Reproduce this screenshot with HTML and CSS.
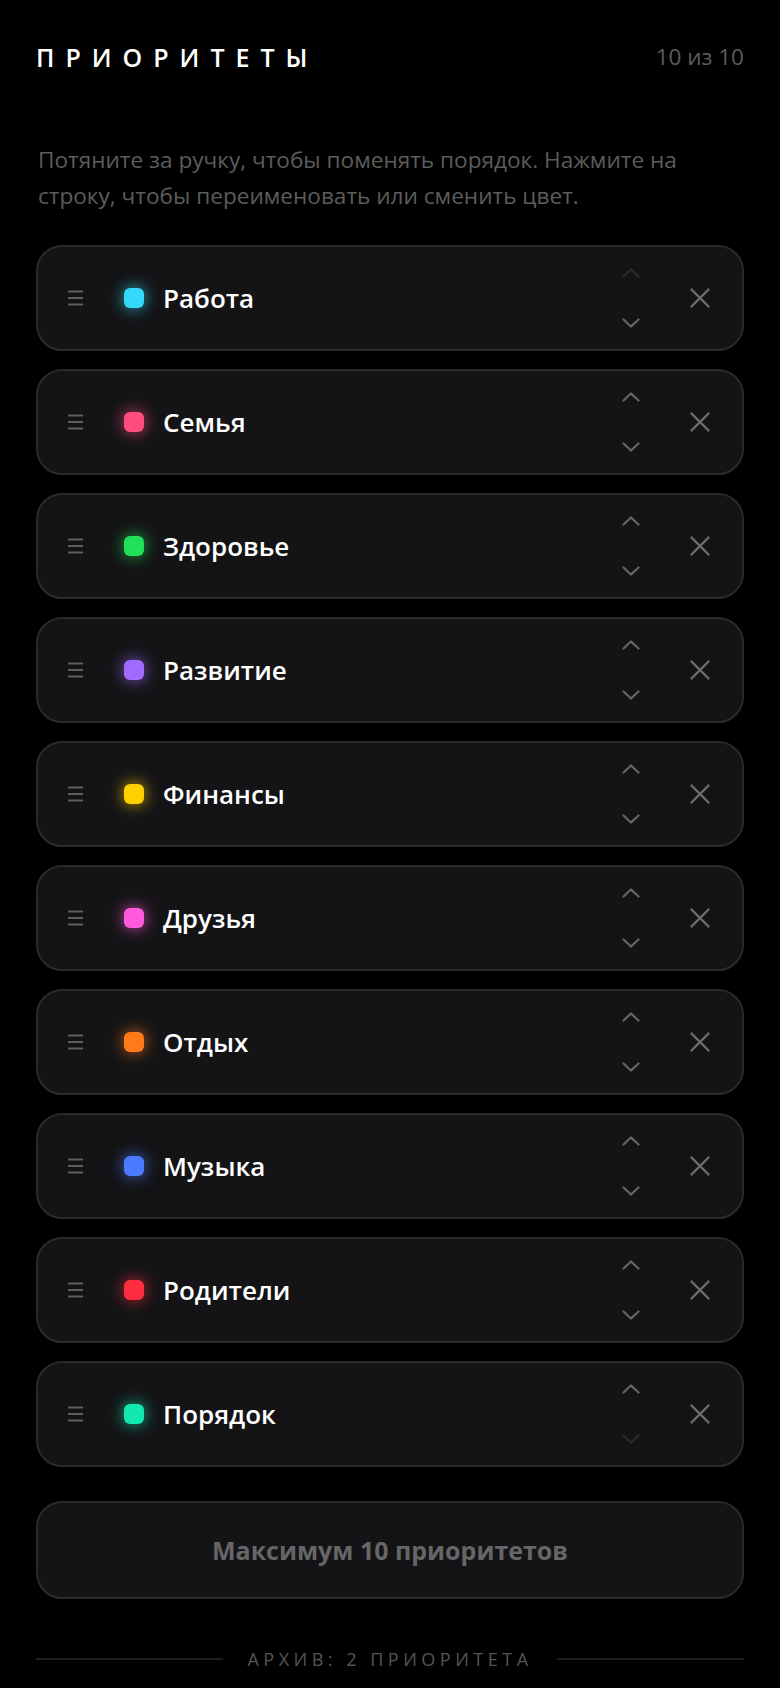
FILE: index.html
```html
<!DOCTYPE html>
<html lang="ru">
<head>
<meta charset="utf-8">
<title>Приоритеты</title>
<link rel="stylesheet" href="styles.css">
</head>
<body>
<div class="page">
  <header class="header">
    <h1 class="title">ПРИОРИТЕТЫ</h1>
    <span class="count">10 из 10</span>
  </header>
  <p class="hint">Потяните за ручку, чтобы поменять порядок. Нажмите на строку, чтобы переименовать или сменить цвет.</p>

  <ul class="list">
    <li class="row">
      <svg class="handle" width="15" height="16" viewBox="0 0 15 16"><path d="M0 1.5H15M0 8H15M0 14.5H15"/></svg>
      <span class="dot" style="--c:#34d8f8"></span>
      <span class="name">Работа</span>
      <span class="arrows">
        <svg class="chev off" width="18" height="10" viewBox="0 0 18 10"><path d="M1.5 8.5L9 1.5L16.5 8.5"/></svg>
        <svg class="chev" width="18" height="10" viewBox="0 0 18 10"><path d="M1.5 1.5L9 8.5L16.5 1.5"/></svg>
      </span>
      <svg class="close" width="20" height="20" viewBox="0 0 20 20"><path d="M1.5 1.5L18.5 18.5M18.5 1.5L1.5 18.5"/></svg>
    </li>
    <li class="row">
      <svg class="handle" width="15" height="16" viewBox="0 0 15 16"><path d="M0 1.5H15M0 8H15M0 14.5H15"/></svg>
      <span class="dot" style="--c:#ff4d80"></span>
      <span class="name">Семья</span>
      <span class="arrows">
        <svg class="chev" width="18" height="10" viewBox="0 0 18 10"><path d="M1.5 8.5L9 1.5L16.5 8.5"/></svg>
        <svg class="chev" width="18" height="10" viewBox="0 0 18 10"><path d="M1.5 1.5L9 8.5L16.5 1.5"/></svg>
      </span>
      <svg class="close" width="20" height="20" viewBox="0 0 20 20"><path d="M1.5 1.5L18.5 18.5M18.5 1.5L1.5 18.5"/></svg>
    </li>
    <li class="row">
      <svg class="handle" width="15" height="16" viewBox="0 0 15 16"><path d="M0 1.5H15M0 8H15M0 14.5H15"/></svg>
      <span class="dot" style="--c:#22e05a"></span>
      <span class="name">Здоровье</span>
      <span class="arrows">
        <svg class="chev" width="18" height="10" viewBox="0 0 18 10"><path d="M1.5 8.5L9 1.5L16.5 8.5"/></svg>
        <svg class="chev" width="18" height="10" viewBox="0 0 18 10"><path d="M1.5 1.5L9 8.5L16.5 1.5"/></svg>
      </span>
      <svg class="close" width="20" height="20" viewBox="0 0 20 20"><path d="M1.5 1.5L18.5 18.5M18.5 1.5L1.5 18.5"/></svg>
    </li>
    <li class="row">
      <svg class="handle" width="15" height="16" viewBox="0 0 15 16"><path d="M0 1.5H15M0 8H15M0 14.5H15"/></svg>
      <span class="dot" style="--c:#a26bff"></span>
      <span class="name">Развитие</span>
      <span class="arrows">
        <svg class="chev" width="18" height="10" viewBox="0 0 18 10"><path d="M1.5 8.5L9 1.5L16.5 8.5"/></svg>
        <svg class="chev" width="18" height="10" viewBox="0 0 18 10"><path d="M1.5 1.5L9 8.5L16.5 1.5"/></svg>
      </span>
      <svg class="close" width="20" height="20" viewBox="0 0 20 20"><path d="M1.5 1.5L18.5 18.5M18.5 1.5L1.5 18.5"/></svg>
    </li>
    <li class="row">
      <svg class="handle" width="15" height="16" viewBox="0 0 15 16"><path d="M0 1.5H15M0 8H15M0 14.5H15"/></svg>
      <span class="dot" style="--c:#ffd000"></span>
      <span class="name">Финансы</span>
      <span class="arrows">
        <svg class="chev" width="18" height="10" viewBox="0 0 18 10"><path d="M1.5 8.5L9 1.5L16.5 8.5"/></svg>
        <svg class="chev" width="18" height="10" viewBox="0 0 18 10"><path d="M1.5 1.5L9 8.5L16.5 1.5"/></svg>
      </span>
      <svg class="close" width="20" height="20" viewBox="0 0 20 20"><path d="M1.5 1.5L18.5 18.5M18.5 1.5L1.5 18.5"/></svg>
    </li>
    <li class="row">
      <svg class="handle" width="15" height="16" viewBox="0 0 15 16"><path d="M0 1.5H15M0 8H15M0 14.5H15"/></svg>
      <span class="dot" style="--c:#ff5adb"></span>
      <span class="name">Друзья</span>
      <span class="arrows">
        <svg class="chev" width="18" height="10" viewBox="0 0 18 10"><path d="M1.5 8.5L9 1.5L16.5 8.5"/></svg>
        <svg class="chev" width="18" height="10" viewBox="0 0 18 10"><path d="M1.5 1.5L9 8.5L16.5 1.5"/></svg>
      </span>
      <svg class="close" width="20" height="20" viewBox="0 0 20 20"><path d="M1.5 1.5L18.5 18.5M18.5 1.5L1.5 18.5"/></svg>
    </li>
    <li class="row">
      <svg class="handle" width="15" height="16" viewBox="0 0 15 16"><path d="M0 1.5H15M0 8H15M0 14.5H15"/></svg>
      <span class="dot" style="--c:#ff7a1a"></span>
      <span class="name">Отдых</span>
      <span class="arrows">
        <svg class="chev" width="18" height="10" viewBox="0 0 18 10"><path d="M1.5 8.5L9 1.5L16.5 8.5"/></svg>
        <svg class="chev" width="18" height="10" viewBox="0 0 18 10"><path d="M1.5 1.5L9 8.5L16.5 1.5"/></svg>
      </span>
      <svg class="close" width="20" height="20" viewBox="0 0 20 20"><path d="M1.5 1.5L18.5 18.5M18.5 1.5L1.5 18.5"/></svg>
    </li>
    <li class="row">
      <svg class="handle" width="15" height="16" viewBox="0 0 15 16"><path d="M0 1.5H15M0 8H15M0 14.5H15"/></svg>
      <span class="dot" style="--c:#4a7bff"></span>
      <span class="name">Музыка</span>
      <span class="arrows">
        <svg class="chev" width="18" height="10" viewBox="0 0 18 10"><path d="M1.5 8.5L9 1.5L16.5 8.5"/></svg>
        <svg class="chev" width="18" height="10" viewBox="0 0 18 10"><path d="M1.5 1.5L9 8.5L16.5 1.5"/></svg>
      </span>
      <svg class="close" width="20" height="20" viewBox="0 0 20 20"><path d="M1.5 1.5L18.5 18.5M18.5 1.5L1.5 18.5"/></svg>
    </li>
    <li class="row">
      <svg class="handle" width="15" height="16" viewBox="0 0 15 16"><path d="M0 1.5H15M0 8H15M0 14.5H15"/></svg>
      <span class="dot" style="--c:#ff2d40"></span>
      <span class="name">Родители</span>
      <span class="arrows">
        <svg class="chev" width="18" height="10" viewBox="0 0 18 10"><path d="M1.5 8.5L9 1.5L16.5 8.5"/></svg>
        <svg class="chev" width="18" height="10" viewBox="0 0 18 10"><path d="M1.5 1.5L9 8.5L16.5 1.5"/></svg>
      </span>
      <svg class="close" width="20" height="20" viewBox="0 0 20 20"><path d="M1.5 1.5L18.5 18.5M18.5 1.5L1.5 18.5"/></svg>
    </li>
    <li class="row">
      <svg class="handle" width="15" height="16" viewBox="0 0 15 16"><path d="M0 1.5H15M0 8H15M0 14.5H15"/></svg>
      <span class="dot" style="--c:#12e8b0"></span>
      <span class="name">Порядок</span>
      <span class="arrows">
        <svg class="chev" width="18" height="10" viewBox="0 0 18 10"><path d="M1.5 8.5L9 1.5L16.5 8.5"/></svg>
        <svg class="chev off" width="18" height="10" viewBox="0 0 18 10"><path d="M1.5 1.5L9 8.5L16.5 1.5"/></svg>
      </span>
      <svg class="close" width="20" height="20" viewBox="0 0 20 20"><path d="M1.5 1.5L18.5 18.5M18.5 1.5L1.5 18.5"/></svg>
    </li>
  </ul>

  <button class="max-btn" type="button">Максимум 10 приоритетов</button>

  <div class="archive">
    <span class="archive-line"></span>
    <span class="archive-text">АРХИВ: 2 ПРИОРИТЕТА</span>
    <span class="archive-line"></span>
  </div>
</div>
</body>
</html>
```

FILE: styles.css
```css
* { box-sizing: border-box; }

html, body {
  margin: 0;
  padding: 0;
  background: #000;
}

body {
  font-family: "Open Sans", "Noto Sans", sans-serif;
  color: #fff;
}

.page {
  padding: 31px 36px 0;
}

.header {
  display: flex;
  justify-content: space-between;
  align-items: center;
  height: 52px;
}

.title {
  margin: 0;
  font-size: 25px;
  font-weight: 600;
  letter-spacing: 11px;
  line-height: 1;
  color: #fff;
}

.count {
  font-size: 22.5px;
  color: #5c5c5c;
  line-height: 1;
}

.hint {
  margin: 59px 0 0;
  padding-left: 2px;
  font-size: 22.6px;
  line-height: 36px;
  color: #5c5c5c;
}

.list {
  list-style: none;
  margin: 31px 0 0;
  padding: 0;
  display: flex;
  flex-direction: column;
  gap: 18px;
}

.row {
  height: 106px;
  display: flex;
  align-items: center;
  background: #141416;
  border: 2px solid #2a2a2d;
  border-radius: 26px;
  padding: 0 32px 0 30px;
}

.handle {
  flex: none;
  fill: none;
  stroke: #5e5e60;
  stroke-width: 2.2;
}

.dot {
  flex: none;
  width: 20px;
  height: 20px;
  border-radius: 6px;
  margin-left: 41px;
  background: var(--c);
  box-shadow: 0 0 14px 2px color-mix(in srgb, var(--c) 55%, transparent);
}

.name {
  flex: 1;
  margin-left: 19px;
  font-size: 26px;
  font-weight: 600;
  color: #fff;
}

.arrows {
  flex: none;
  display: flex;
  flex-direction: column;
  align-items: center;
  gap: 40px;
  margin-right: 50px;
}

.chev {
  display: block;
  fill: none;
  stroke: #67676a;
  stroke-width: 2.2;
  stroke-linecap: round;
  stroke-linejoin: round;
}

.chev.off {
  stroke: #2c2c2e;
}

.close {
  flex: none;
  fill: none;
  stroke: #6e6e70;
  stroke-width: 2.4;
  stroke-linecap: round;
}

.max-btn {
  display: block;
  width: 100%;
  height: 98px;
  margin-top: 34px;
  background: #141416;
  border: 2px solid #2a2a2d;
  border-radius: 26px;
  font-family: inherit;
  font-size: 25px;
  font-weight: 700;
  color: #666668;
}

.archive {
  display: flex;
  align-items: center;
  gap: 24px;
  margin-top: 48px;
}

.archive-line {
  flex: 1;
  height: 2px;
  background: #1f1f21;
}

.archive-text {
  font-size: 18px;
  letter-spacing: 0.25em;
  color: #555557;
  line-height: 24px;
}
```
